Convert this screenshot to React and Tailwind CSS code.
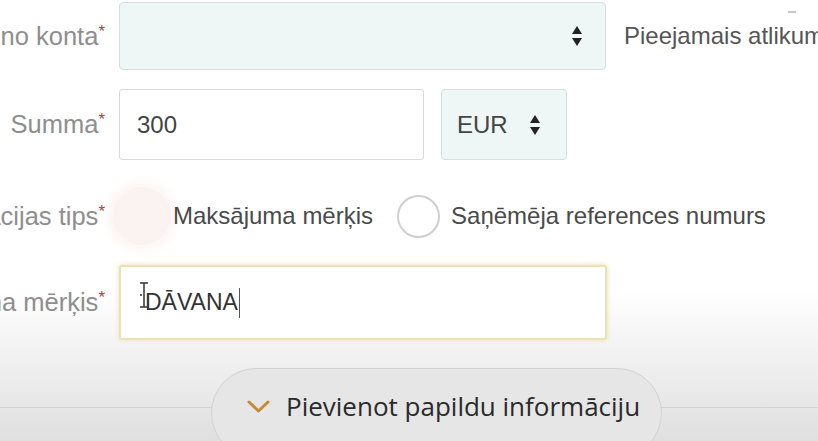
const Arrows = () => (
	<svg width="12" height="22" viewBox="0 0 12 22" className="shrink-0">
		<path d="M6 1 L11 9 L1 9 Z" fill="#222" />
		<path d="M6 21 L11 13 L1 13 Z" fill="#222" />
	</svg>
)

const Label = ({ text }) => (
	<div className="flex justify-end overflow-hidden whitespace-nowrap text-[25.5px] text-[#8e8e8e]">
		<span>
			{text}
			<span className="text-[#a8463f] text-[17px] align-top relative top-[2px]">*</span>
		</span>
	</div>
)

export default function App() {
	return (
		<div
			className="relative w-[818px] h-[441px] overflow-hidden bg-gradient-to-b from-white from-[66%] to-[#dfdfdf]"
			style={{ fontFamily: '"Liberation Sans", Arial, sans-serif' }}
		>
			<div className="absolute right-[22px] top-[11px] w-[8px] h-[2px] bg-[#c8c8c8]" />

			<div className="grid grid-cols-[105px_1fr] gap-x-[14px] items-center pt-[2px]">
				<Label text="Pārskaitīt no konta" />
				<div className="flex items-center">
					<div className="flex items-center justify-end w-[487px] h-[68px] pr-[22px] bg-[#eef6f6] border border-[#d6dede] rounded-[4px]">
						<Arrows />
					</div>
					<span className="ml-[18px] text-[24px] text-[#555] whitespace-nowrap">Pieejamais atlikums</span>
				</div>

				<div className="col-span-2 h-[19px]" />

				<Label text="Summa" />
				<div className="flex items-center gap-[17px]">
					<div className="flex items-center w-[305px] h-[71px] px-[17px] bg-white border border-[#d9d9d9] rounded-[3px] text-[24px] text-[#444]">
						300
					</div>
					<div className="flex items-center justify-between w-[126px] h-[71px] pl-[15px] pr-[25px] bg-[#eef6f6] border border-[#d6dede] rounded-[4px] text-[24px] text-[#444]">
						EUR
						<Arrows />
					</div>
				</div>

				<div className="col-span-2 h-[22px]" />

				<Label text="Informācijas tips" />
				<div className="flex items-center h-[68px] text-[24px] text-[#4a4a4a] whitespace-nowrap">
					<div className="w-[58px] h-[58px] -ml-[6px] mr-[2px] rounded-full bg-[#fbf3f1] shadow-[0_0_10px_6px_#fdf6f4]" />
					<span>Maksājuma mērķis</span>
					<div className="ml-[24px] w-[43px] h-[43px] rounded-full border-2 border-[#cfcfcf] bg-white" />
					<span className="ml-[11px]">Saņēmēja references numurs</span>
				</div>

				<div className="col-span-2 h-[15px]" />

				<Label text="Maksājuma mērķis" />
				<div className="relative flex items-center w-[488px] h-[75px] px-[24px] bg-white border-2 border-[#ece1b4] rounded-[3px] shadow-[0_0_4px_1px_#f1e8c2] text-[23px] text-[#333]">
					DĀVANA
					<span className="ml-[1px] w-[1.5px] h-[30px] bg-[#555]" />
					<svg width="12" height="26" viewBox="0 0 12 26" className="absolute left-[17px] top-[15px]">
						<path d="M2 1 H10 M6 1 V25 M2 25 H10 M2 13 H4" stroke="#333" strokeWidth="1.5" fill="none" />
					</svg>
				</div>
			</div>

			<div className="absolute left-0 right-0 top-[407px] h-[1px] bg-[#d3d3d3]" />

			<div className="relative mt-[28px] ml-[211px] w-[451px] h-[90px] rounded-full border border-[#d2d2d2] bg-[#e6e6e6] flex items-start pt-[18px] pl-[35px]">
				<svg width="23" height="14" viewBox="0 0 23 14" className="mt-[13px] shrink-0">
					<path d="M2 2 L11.5 11 L21 2" stroke="#c98a35" strokeWidth="3" fill="none" strokeLinecap="round" strokeLinejoin="round" />
				</svg>
				<span
					className="ml-[16px] text-[26px] text-[#2a2a2a] whitespace-nowrap"
					style={{ fontFamily: '"Open Sans", sans-serif' }}
				>
					Pievienot papildu informāciju
				</span>
			</div>
		</div>
	)
}
